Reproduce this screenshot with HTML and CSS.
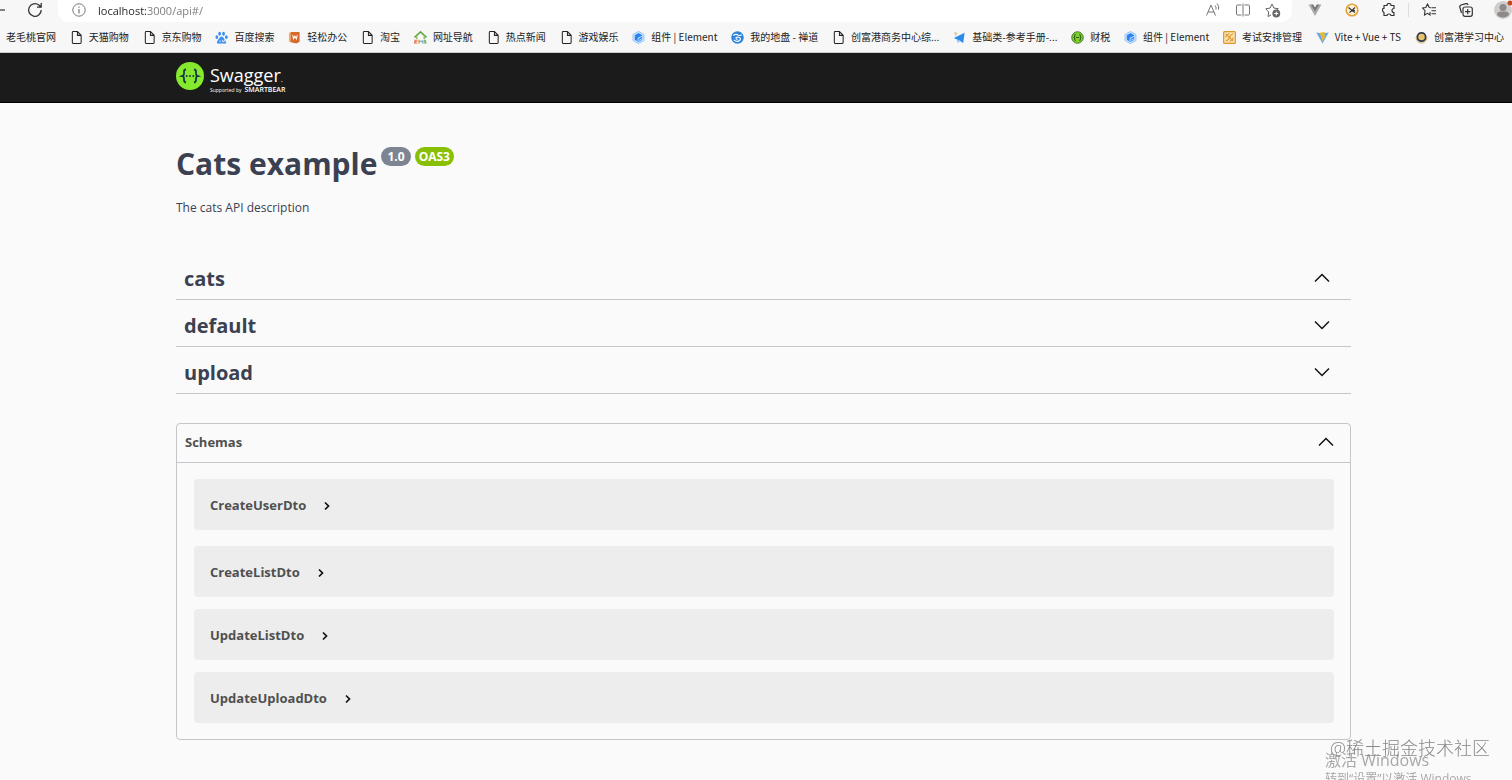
FILE: index.html
```html
<!DOCTYPE html>
<html lang="zh-CN">
<head>
  <meta charset="UTF-8">
  <meta name="viewport" content="width=device-width, initial-scale=1.0">
  <title>Swagger UI</title>
  <link rel="stylesheet" href="styles.css">
</head>
<body>
  <svg class="sprite" aria-hidden="true">
    <symbol id="file" viewBox="0 0 14 14"><path d="M2.500 1.500Q2.500.6 3.400.6H8l4 4v7.900q0 .9-.9.900H3.400q-.9 0-.9-.9zM8 .8v3.900h3.900" fill="none" stroke="#222" stroke-width="1.100"/></symbol>
    <symbol id="element" viewBox="0 0 14 14"><path d="M7 .4l5.900 3.300v6.600L7 13.600l-5.900-3.300V3.700z" fill="#cfe6ff" stroke="#7db9fa" stroke-width=".8"/><path d="M7 2.200l4 2.300v5l-4 2.300-4-2.300v-5z" fill="#2a85f0"/><path d="M11 5.500L6.500 8v3M11 8.200L7 10.400M6.500 8L9 6.700" fill="none" stroke="#cfe6ff" stroke-width=".9"/></symbol>
    <symbol id="up" viewBox="0 0 16 10"><path d="M1 8.500l7-7 7 7" fill="none" stroke="#111" stroke-width="1.500"/></symbol>
    <symbol id="down" viewBox="0 0 16 10"><path d="M1 1.500l7 7 7-7" fill="none" stroke="#111" stroke-width="1.500"/></symbol>
    <symbol id="right" viewBox="0 0 6 10"><path d="M1 1.500L4.500 5 1 8.500" fill="none" stroke="#111" stroke-width="1.700"/></symbol>
  </svg>

  <div class="toolbar">
    <button class="nav-back" aria-label="Back"><svg width="6" height="14" viewBox="0 0 6 14"><path d="M0 7h5" stroke="#333" stroke-width="1.200"/></svg></button>
    <button class="nav-refresh" aria-label="Refresh"><svg width="16" height="16" viewBox="0 0 16 16" fill="none" stroke="#333" stroke-width="1.300"><path d="M14.200 8A6.300 6.300 0 1 1 11.900 3.100L14 5M14.200 1v4.200H10"/></svg></button>
    <div class="address">
      <button aria-label="Site information"><svg width="14" height="14" viewBox="0 0 14 14"><circle cx="7" cy="7" r="6.200" fill="none" stroke="#777"/><path d="M7 6v4.500M7 3.500v1.300" stroke="#777" stroke-width="1.200"/></svg></button>
      <input type="text" value="localhost:3000/api#/" aria-label="Address">
      <button aria-label="Read aloud"><svg width="16" height="16" viewBox="0 0 16 16" fill="none" stroke="#777"><path d="M1.500 13.500L6 3l4.500 10.500M3 10h6M10 3.500q1.500 1.500 1 4M12 1.500q2.500 2.500 1.500 6"/></svg></button>
      <button aria-label="Split screen"><svg width="16" height="16" viewBox="0 0 16 16" fill="none" stroke="#777"><path d="M6.500 3H2.500q-1 0-1 1v8q0 1 1 1h4M9.500 3h4q1 0 1 1v8q0 1-1 1h-4M8 1.500v13"/></svg></button>
      <button aria-label="Add to favorites"><svg width="16" height="16" viewBox="0 0 16 16"><path d="M6 13l-3 1.500.7-4.500L.8 6.800l4.200-.7L7 2l2 4.100 4.300.6-2 1.800" fill="none" stroke="#666"/><circle cx="11.300" cy="11.500" r="3.900" fill="#666"/><path d="M11.300 9.500v4M9.300 11.500h4" stroke="#fff"/></svg></button>
    </div>
    <button aria-label="Vue devtools"><svg width="14" height="14" viewBox="0 0 14 14"><path d="M.5 1.500h4L7 5.500l2.500-4h4L7 13z" fill="#aaa"/><path d="M3 1.500h2.200L7 4.400l1.800-2.900H11L7 8.500z" fill="#777"/></svg></button>
    <button aria-label="Extension"><svg width="14" height="14" viewBox="0 0 14 14"><circle cx="7" cy="7" r="5.800" fill="#fff3d8" stroke="#e3a23a" stroke-width="1.600"/><path d="M3.500 4.500L7 7.500l3-3M4.500 9.500L7 7.500l3 2M7 7.500h3" fill="none" stroke="#333" stroke-width="1.200"/></svg></button>
    <button aria-label="Extensions"><svg width="14" height="14" viewBox="0 0 14 14"><path d="M2 2.500h3q0-2 2-2t2 2h3v3q-2 0-2 2t2 2v3H9q0-1.500-2-1.500t-2 1.500H2V9.500Q.5 9 .5 7T2 5.500z" fill="none" stroke="#333" stroke-width="1.200" stroke-linejoin="round"/></svg></button>
    <span class="divider"></span>
    <button aria-label="Favorites"><svg width="14" height="14" viewBox="0 0 14 14" fill="none" stroke="#333" stroke-width="1.100"><path d="M9 4.700L7.200 4.500 5.500 1 3.800 4.500.5 5l2.500 2.700L2.500 12l3-1.700L8 12V9M9.500 4.700H14M9.500 7.700H14M9.500 10.700H14"/></svg></button>
    <button aria-label="Collections"><svg width="14" height="14" viewBox="0 0 14 14" fill="none" stroke="#333" stroke-width="1.200"><rect x="4" y="4" width="9.300" height="9.300" rx="2"/><path d="M8.700 6v5.300M6 8.700h5.300M2.500 10L.8 4Q.5 2.500 2 2l5-1.400q1.500-.3 2 1.400"/></svg></button>
    <button class="profile" aria-label="Profile"><svg width="18" height="20" viewBox="0 0 18 20"><circle cx="9" cy="10" r="9" fill="#cfcdcc"/><circle cx="9" cy="7.500" r="3.500" fill="#8d8988"/><path d="M3 15q0-3.500 3.500-3.500h5q3.500 0 3.500 3.500-6 5-12 0z" fill="#8d8988"/><circle cx="16" cy="3" r="2.500" fill="#c2491d"/></svg></button>
  </div>

  <nav class="bookmarks">
    <a href="#">老毛桃官网</a>
    <a href="#"><svg><use href="#file"/></svg>天猫购物</a>
    <a href="#"><svg><use href="#file"/></svg>京东购物</a>
    <a href="#"><svg viewBox="0 0 14 14" fill="#3a8ff0"><ellipse cx="5" cy="3" rx="1.500" ry="2.200"/><ellipse cx="9.200" cy="3" rx="1.500" ry="2.200"/><ellipse cx="2" cy="6.500" rx="1.500" ry="2"/><ellipse cx="12.200" cy="6.500" rx="1.500" ry="2"/><path d="M7 6q1.500 0 3 2.500t2 3.500q0 2-2.500 1.500h-5Q2 14 2 12q.5-1.500 2-3.500T7 6z"/><path d="M4.500 11h2M8 9.500v2h2v-2" fill="none" stroke="#fff" stroke-width=".8"/></svg>百度搜索</a>
    <a href="#"><svg viewBox="0 0 14 14"><path d="M1 2l2.500-1v11L1 11.500z" fill="#f3b06d"/><path d="M3 1h9.500v10.500L9 13.500 3 12z" fill="#d9692a"/><path d="M5 4.500l1 4 1.500-3 1.500 3 1-4" fill="none" stroke="#fff" stroke-width="1.100"/></svg>轻松办公</a>
    <a href="#"><svg><use href="#file"/></svg>淘宝</a>
    <a href="#"><svg viewBox="0 0 14 14" fill="none"><path d="M.5 7L7 1l6.500 6" stroke="#65a843" stroke-width="1.800"/><path d="M3 6v3M11 6v3" stroke="#8bbb55" stroke-width="1.500"/><path d="M.5 10h2v1.500h-2V13h2.500" stroke="#df5533"/><path d="M4 10h2v3H4M4 11.500h2" stroke="#e79a2a"/><path d="M7.500 10v1.500h2M9.500 10v3.500" stroke="#4b9ad6"/><path d="M13 10h-2v1.500h2V13h-2.500" stroke="#65a843"/></svg>网址导航</a>
    <a href="#"><svg><use href="#file"/></svg>热点新闻</a>
    <a href="#"><svg><use href="#file"/></svg>游戏娱乐</a>
    <a href="#"><svg><use href="#element"/></svg>组件 | Element</a>
    <a href="#"><svg viewBox="0 0 14 14"><circle cx="7" cy="7" r="6.700" fill="#2c83dc"/><path d="M2.500 5Q5 2.500 8 4.500q2 1 3.500-.5M3 9.500q3.500 3 6.500.5 1.500-2-.5-3t-3.500 0q-.5 2 1.500 2" fill="none" stroke="#fff" stroke-width="1.200"/></svg>我的地盘 - 禅道</a>
    <a href="#"><svg><use href="#file"/></svg>创富港商务中心综...</a>
    <a href="#"><svg viewBox="0 0 14 14"><path d="M1 1l4 1-2 4z" fill="#d8c79a"/><path d="M1 7.500L12.500 2 11 13l-4-2.500z" fill="#2c8bea"/><path d="M4 9l4 1.500-3 2.500z" fill="#8cc4fa"/></svg>基础类-参考手册-...</a>
    <a href="#"><svg viewBox="0 0 14 14"><circle cx="7" cy="7" r="6.200" fill="#7ed32f" stroke="#3f6f1c"/><path d="M5 3.500q-1.300 0-1 1.800T3 7q1.300.2 1 1.800T5 10.500M9 3.500q1.300 0 1 1.800T11 7q-1.300.2-1 1.800T9 10.500M5.500 7h3" fill="none" stroke="#25420f"/></svg>财税</a>
    <a href="#"><svg><use href="#element"/></svg>组件 | Element</a>
    <a href="#"><svg viewBox="0 0 14 14"><rect x=".7" y=".7" width="12.600" height="12.600" rx="1" fill="#fbe3b4" stroke="#dd982d" stroke-width="1.300"/><path d="M3 3l8 8M11 3q-3 1-4 4t-4 4M3 7q0-3 4-4M11 7q0 3-4 4" fill="none" stroke="#dd982d" stroke-width="1.200"/></svg>考试安排管理</a>
    <a href="#"><svg viewBox="0 0 14 14"><path d="M.3 1.500L7 13.500l6.700-12L7 2.700z" fill="#69a8ee"/><path d="M4 2l5.500-1L9 4.500l2-.3L7 11z" fill="#e7b92e"/></svg>Vite + Vue + TS</a>
    <a href="#"><svg viewBox="0 0 14 14"><circle cx="7" cy="6.500" r="4.500" fill="#e6c46d" stroke="#333b4d" stroke-width="2"/><path d="M1 7q1 6 6 6t6-6" fill="none" stroke="#cfae66"/></svg>创富港学习中心</a>
  </nav>

  <header class="topbar">
    <a class="logo" href="#">
      <svg class="logo-mark" viewBox="0 0 28 28"><circle cx="14" cy="14" r="14" fill="#85ea2d"/><path d="M10 7.500Q7.800 7.500 8 10t-.3 3-1.700 1q1.400.2 1.700 1t.3 3 2 2.500M18 7.500q2.200 0 2 2.500t.3 3 1.700 1q-1.400.2-1.700 1t-.3 3-2 2.500" fill="none" stroke="#173647" stroke-width="1.800"/><circle cx="10.700" cy="14" r="1" fill="#173647"/><circle cx="14" cy="14" r="1" fill="#173647"/><circle cx="17.300" cy="14" r="1" fill="#173647"/></svg>
      <span class="logo-text">
        <span class="logo-name">Swagger<small>.</small></span>
        <span class="logo-sub">Supported by <b>SMARTBEAR</b></span>
      </span>
    </a>
  </header>

  <main class="wrapper">
    <section class="info">
      <h1>Cats example</h1>
      <span class="version">1.0</span>
      <span class="version oas">OAS3</span>
    </section>
    <p class="description">The cats API description</p>

    <section class="tags">
      <h2><button aria-expanded="true">cats<svg><use href="#up"/></svg></button></h2>
      <h2><button aria-expanded="false">default<svg><use href="#down"/></svg></button></h2>
      <h2><button aria-expanded="false">upload<svg><use href="#down"/></svg></button></h2>
    </section>

    <section class="models">
      <h3><button aria-expanded="true">Schemas<svg><use href="#up"/></svg></button></h3>
      <div class="model-list">
        <button class="model">CreateUserDto<svg><use href="#right"/></svg></button>
        <button class="model">CreateListDto<svg><use href="#right"/></svg></button>
        <button class="model">UpdateListDto<svg><use href="#right"/></svg></button>
        <button class="model">UpdateUploadDto<svg><use href="#right"/></svg></button>
      </div>
    </section>
  </main>

  <div class="activate">
    <div class="activate-title">激活 Windows</div>
    <div class="activate-text">转到“设置”以激活 Windows。</div>
  </div>
  <div class="watermark">@稀土掘金技术社区</div>
</body>
</html>
```
FILE: styles.css
```css
* {
  box-sizing: border-box;
}
body {
  margin: 0;
  min-height: 100vh;
  background: #fafafa;
  color: #3b4151;
  font-family: "Open Sans", "Noto Sans CJK SC", sans-serif;
  overflow: hidden;
}
button {
  font: inherit;
  color: inherit;
  background: none;
  border: 0;
  padding: 0;
}
svg {
  flex: none;
}
.sprite {
  display: none;
}

/* browser bar */
.toolbar {
  display: flex;
  height: 22px;
  background: #f7f7f7;
}
.toolbar button {
  display: flex;
  align-items: center;
  justify-content: center;
  width: 37px;
  height: 20px;
}
.toolbar .nav-back {
  width: 16px;
  justify-content: flex-start;
}
.toolbar .nav-refresh {
  margin-right: 5px;
}
.address {
  flex: 1;
  display: flex;
  background: #fff;
  border-radius: 0 0 11px 11px;
  margin-right: 4px;
  padding: 0 4px 0 6px;
}
.toolbar .address button {
  width: 30px;
}
.address input {
  flex: 1;
  height: 20px;
  border: 0;
  padding: 0 4px;
  font: 11px "Open Sans", sans-serif;
  color: transparent;
  background: linear-gradient(to right, #222 52px, #777 52px);
  -webkit-background-clip: text;
  background-clip: text;
  outline: 0;
}
.divider {
  width: 1px;
  height: 14px;
  margin: 3px 1px;
  background: #ddd;
}
.toolbar .profile {
  width: 28px;
  justify-content: flex-end;
}

.bookmarks {
  display: flex;
  justify-content: space-between;
  align-items: center;
  height: 31px;
  padding: 0 8px 0 6px;
  background: #f7f7f7;
  border-bottom: 1px solid #ccc;
  font-family: "Noto Sans CJK SC", sans-serif;
}
.bookmarks a {
  display: flex;
  align-items: center;
  gap: 6px;
  font-size: 10px;
  line-height: 14px;
  color: #222;
  text-decoration: none;
  white-space: nowrap;
}
.bookmarks svg {
  width: 13px;
  height: 13px;
}

/* swagger header */
.topbar {
  height: 50px;
  padding: 9px 176px 0;
  background: #1b1b1b;
  border-bottom: 1px solid #000;
}
.logo {
  display: inline-flex;
  gap: 6px;
  color: #fff;
  text-decoration: none;
}
.logo-mark {
  width: 28px;
  height: 28px;
}
.logo-text {
  display: flex;
  flex-direction: column;
  padding-top: 2px;
}
.logo-name {
  height: 22px;
  font-size: 18px;
  line-height: 22px;
}
.logo-name small {
  font-size: 8px;
  line-height: 8px;
}
.logo-sub {
  display: flex;
  align-items: center;
  gap: 3px;
  height: 8px;
  font-size: 5px;
  line-height: 8px;
}
.logo-sub b {
  font-size: 7px;
  font-weight: 600;
}

.wrapper {
  padding: 0 161px 0 176px;
}
.info {
  display: flex;
  gap: 4px;
  margin-top: 38px;
}
.info h1 {
  margin: 0;
  font-size: 30px;
  font-weight: bold;
  line-height: 46px;
}
.version {
  height: 19px;
  margin-top: 6px;
  padding: 0 6px;
  border-radius: 10px;
  background: #7d8492;
  color: #fff;
  font-size: 12px;
  font-weight: bold;
  line-height: 19px;
}
.version.oas {
  padding: 0 4px;
  background: #89bf04;
}
.description {
  margin: 12px 0 36px;
  font-size: 12px;
  line-height: 18px;
}

.tags h2 {
  margin: 0;
  border-bottom: 1px solid #c4c6cb;
}
.tags button {
  display: flex;
  align-items: center;
  justify-content: space-between;
  width: 100%;
  height: 46px;
  padding: 4px 21px 0 8px;
  font-size: 20px;
  font-weight: bold;
}
.tags svg,
.models h3 svg {
  width: 16px;
  height: 10px;
}

.models {
  margin-top: 29px;
  border: 1px solid #c4c6cb;
  border-radius: 4px;
}
.models h3 {
  margin: 0;
  border-bottom: 1px solid #c4c6cb;
}
.models h3 button {
  display: flex;
  align-items: center;
  justify-content: space-between;
  width: 100%;
  height: 38px;
  padding: 0 16px 2px 8px;
  color: #505050;
  font-size: 13px;
  font-weight: bold;
}
.model-list {
  display: flex;
  flex-direction: column;
  gap: 12px;
  padding: 16px 16px 16px 17px;
}
.model {
  display: flex;
  align-items: center;
  gap: 18px;
  height: 51px;
  padding: 0 16px;
  border-radius: 4px;
  background: #ededed;
  color: #505050;
  font-size: 13px;
  font-weight: bold;
}
.model:first-child {
  margin-bottom: 4px;
}
.model svg {
  width: 6px;
  height: 10px;
  margin-top: 3px;
}

/* desktop overlays */
.activate {
  position: fixed;
  left: calc(100% - 187px);
  bottom: -8px;
  color: #a8a8a8;
  white-space: nowrap;
}
.activate-title {
  font-size: 16px;
  line-height: 20px;
}
.activate-text {
  font-size: 12px;
  line-height: 18px;
}
.watermark {
  position: fixed;
  right: 22px;
  bottom: 20px;
  color: #888;
  font-size: 18px;
  font-weight: 300;
  line-height: 24px;
}
```
